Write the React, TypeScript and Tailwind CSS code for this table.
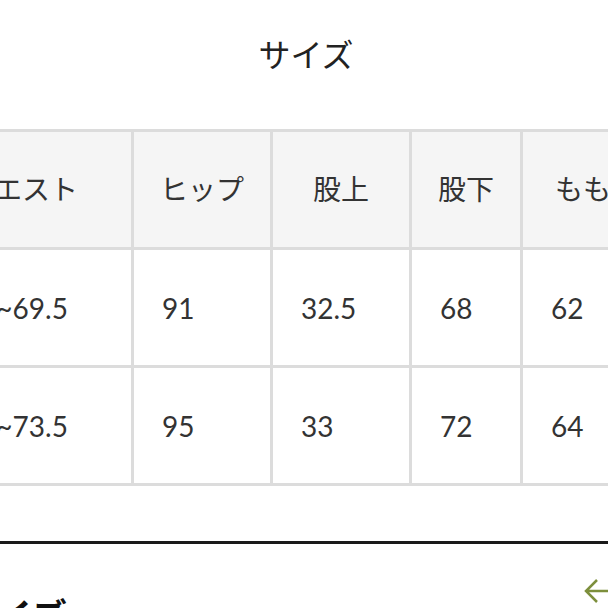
const headers = ['ウエスト', 'ヒップ', '股上', '股下', 'もも']

const rows = [
  ['63.5~69.5', '91', '32.5', '68', '62'],
  ['67.5~73.5', '95', '33', '72', '64'],
]

export default function App() {
  return (
    <div className="relative w-[608px] h-[608px] overflow-hidden bg-white text-[#333] font-['Lato','Noto_Sans_CJK_JP',sans-serif]">
      {/* 見出し */}
      <div className="h-[129px] pt-[35px] flex justify-center">
        <h2 className="text-[32px] leading-[40px] font-normal text-[#222] pl-[4px]">サイズ</h2>
      </div>

      {/* サイズ表（横スクロール中） */}
      <div className="ml-[-90px] w-max grid grid-cols-[218px_136px_136px_108px_120px] auto-rows-[115px] gap-[3px] p-[3px] bg-[#dcdcdc]">
        {headers.map(h => (
          <div key={h} className="bg-[#f5f5f5] flex items-center justify-center text-[28px] pb-[2px]">
            {h}
          </div>
        ))}
        {rows.map((r, i) =>
          r.map((v, j) => (
            <div key={`${i}-${j}`} className="bg-white flex items-center pl-[28px] text-[28px]">
              {v}
            </div>
          ))
        )}
      </div>

      <div className="mt-[55px] h-[3px] bg-[#1a1a1a]" />

      <div className="flex items-start justify-between pt-[54px]">
        <h2 className="ml-[-40px] text-[36px] leading-none font-bold text-[#111]">サイズ</h2>
        <svg width="30" height="24" viewBox="0 0 30 24" className="mr-[-6px] mt-[-19px]" fill="none" stroke="#7d8f3c" strokeWidth="2.5">
          <path d="M30 12H2M13 1 2 12l11 11" />
        </svg>
      </div>
    </div>
  )
}
